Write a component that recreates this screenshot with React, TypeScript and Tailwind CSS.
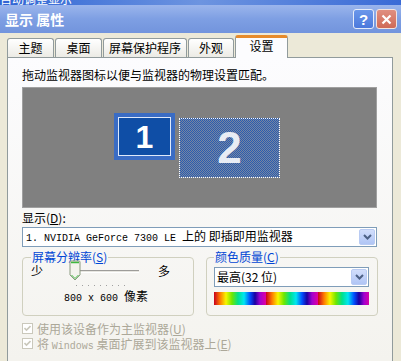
import React from "react";

const CJK = "font-['SimSun','Noto_Sans_CJK_SC',sans-serif]";

function Chevron() {
  return (
    <svg width="9" height="6" viewBox="0 0 9 6">
      <path d="M1 1 L4.5 4.5 L8 1" stroke="#4d6185" strokeWidth="2" fill="none" />
    </svg>
  );
}

function ComboArrow() {
  return (
    <div className="w-[16px] h-[16px] my-[1px] mr-[1px] rounded-[2px] border border-[#b9cbf3] bg-gradient-to-b from-[#d2defb] to-[#b0c5f5] flex items-center justify-center">
      <Chevron />
    </div>
  );
}

function Tab({ label, w, selected }: { label: string; w: number; selected?: boolean }) {
  if (selected) {
    return (
      <div
        className="relative z-10 -mb-px h-[23px] border border-b-0 border-[#919b9c] border-t-[#e68b2c] border-t-[3px] rounded-t-[3px] bg-[#fcfcfe] flex items-start justify-center pt-[1px] text-[12px] leading-[14px] text-black"
        style={{ width: w }}
      >
        {label}
      </div>
    );
  }
  return (
    <div
      className="h-[19px] border border-b-0 border-[#919b9c] rounded-t-[3px] bg-gradient-to-b from-[#ffffff] to-[#ecebe5] flex items-center justify-center text-[12px] leading-[14px] text-black"
      style={{ width: w }}
    >
      {label}
    </div>
  );
}

function Check({ label }: { label: React.ReactNode }) {
  return (
    <div className="flex items-center h-[15px]">
      <div className="w-[11px] h-[11px] border border-[#cac8bb] bg-white flex items-center justify-center">
        <svg width="7" height="7" viewBox="0 0 7 7">
          <path d="M0.5 3 L2.5 5 L6.5 1" stroke="#cac8bb" strokeWidth="1.6" fill="none" />
        </svg>
      </div>
      <span className="ml-[4px] h-[12px] text-[12px] leading-[12px] text-[#aca899] whitespace-nowrap">{label}</span>
    </div>
  );
}

export default function App() {
  return (
    <div className={`w-[401px] h-[361px] overflow-hidden bg-[#ece9d8] flex flex-col ${CJK}`}>
      {/* strip of window behind */}
      <div className="h-[5px] bg-gradient-to-r from-[#2f64d4] via-[#6d94e0] to-[#3a6ad6] overflow-hidden relative">
        <span className="absolute left-[0px] top-[-7px] text-[12px] leading-[12px] text-white whitespace-nowrap">
          自动调整显示
        </span>
      </div>
      {/* title bar */}
      <div className="h-[28px] bg-gradient-to-b from-[#9bb5ec] via-[#7e9fe3] to-[#7294dd] flex items-center pl-[5px] pr-[4px]">
        <span className="text-white font-bold text-[14px] leading-[16px] whitespace-nowrap">显示 属性</span>
        <div className="ml-auto flex gap-[2px]">
          <div className="w-[21px] h-[20px] rounded-[3px] border border-[#e6ecfa] bg-gradient-to-b from-[#6b97ea] to-[#4c79dc] flex items-center justify-center text-white font-bold text-[15px] leading-[15px] font-['Liberation_Sans',sans-serif]">
            ?
          </div>
          <div className="w-[21px] h-[20px] rounded-[3px] border border-[#f1e3e0] bg-gradient-to-b from-[#e08f80] to-[#cf6a57] flex items-center justify-center">
            <svg width="11" height="11" viewBox="0 0 11 11">
              <path d="M1.5 1.5 L9.5 9.5 M9.5 1.5 L1.5 9.5" stroke="white" strokeWidth="2.2" />
            </svg>
          </div>
        </div>
      </div>
      {/* body */}
      <div className="flex-1 pl-[7px] flex flex-col">
        <div className="h-[24px] flex items-end gap-[1px]">
          <Tab label="主题" w={47} />
          <Tab label="桌面" w={47} />
          <Tab label="屏幕保护程序" w={84} />
          <Tab label="外观" w={46} />
          <Tab label="设置" w={53} selected />
        </div>
        <div className="w-[386px] flex-1 border border-[#919b9c] border-b-0 bg-gradient-to-b from-[#fcfcfe] to-[#f4f3ee] pl-[14px] flex flex-col">
          <div className="mt-[11px] h-[12px] text-[12px] leading-[12px] text-black whitespace-nowrap">
            拖动监视器图标以便与监视器的物理设置匹配。
          </div>
          {/* monitor arrangement */}
          <div className="mt-[6px] w-[355px] h-[121px] bg-[#808080] border border-[#a0a0a0] flex pl-[91px] pt-[25px] gap-[4px]">
            <div className="w-[61px] h-[47px] bg-[#3a6cc4] p-[4px]">
              <div className="w-full h-full border border-[#dfe9fa] bg-[#0f4ea6] flex items-center justify-center text-white font-bold text-[32px] leading-[32px] font-['Liberation_Sans',sans-serif]">
                1
              </div>
            </div>
            <div className="mt-[5px] w-[101px] h-[60px] border border-dotted border-white bg-[repeating-conic-gradient(#2a5cb0_0%_25%,#7686a2_0%_50%)] bg-[length:2px_2px] flex items-center justify-center text-[#e8ecf4] font-bold text-[44px] leading-[44px] font-['Liberation_Sans',sans-serif]">
              2
            </div>
          </div>
          <div className="mt-[4px] h-[12px] text-[12px] leading-[12px] text-black whitespace-nowrap">
            显示(<u className="inline-block leading-[12px]">D</u>):
          </div>
          <div className="mt-[3px] w-[355px] h-[20px] border border-[#7f9db9] bg-white flex items-center">
            <span className="pl-[3px] text-[12px] leading-[12px] text-black whitespace-nowrap">
              <span className="inline-block leading-[12px] font-['Liberation_Mono',monospace] text-[10px] whitespace-pre">1. NVIDIA GeForce 7300 LE </span>
              上的 即插即用监视器
            </span>
            <div className="ml-auto">
              <ComboArrow />
            </div>
          </div>
          {/* group boxes */}
          <div className="mt-[4px] w-[356px] grid grid-cols-2 gap-[12px]">
            <fieldset className="h-[65px] border border-[#d0d0bf] rounded-[4px] px-[8px] relative">
              <legend className="px-[1px] ml-[0px] text-[12px] leading-[12px] text-[#0046d5] whitespace-nowrap">
                屏幕分辨率(<u className="inline-block leading-[12px]">S</u>)
              </legend>
              <div className="flex items-center h-[12px] mt-[2px]">
                <span className="text-[12px] leading-[12px]">少</span>
                <div className="relative ml-[33px] w-[63px] h-[12px] flex items-center">
                  <div className="w-full h-[3px] border-t border-[#9d9c99] border-b border-b-white bg-[#e7e6e0]" />
                  <div className="absolute left-[-7px] top-[-5px] w-[12px] h-[21px]">
                    <svg width="12" height="21" viewBox="0 0 12 21">
                      <path d="M1 2 Q1 1 2 1 L10 1 Q11 1 11 2 L11 15 L6 20 L1 15 Z" fill="#f4f3ee" stroke="#8b9a80" />
                      <path d="M2 2.5 L10 2.5" stroke="#3fb83f" strokeWidth="1.5" />
                      <path d="M2.5 15 L6 18.5 L9.5 15" stroke="#3fb83f" strokeWidth="1" fill="none" />
                    </svg>
                  </div>
                </div>
                <span className="ml-[19px] text-[12px] leading-[12px]">多</span>
              </div>
              <div className="ml-[45px] mt-[8px] flex gap-[5px]">
                {Array.from({ length: 9 }).map((_, i) => (
                  <div key={i} className="w-[1px] h-[1px] bg-[#a0a0a0]" />
                ))}
              </div>
              <div className="mt-[4px] ml-[33px] h-[12px] text-[12px] leading-[12px] whitespace-nowrap">
                <span className="inline-block leading-[12px] font-['Liberation_Mono',monospace] text-[10px] whitespace-pre">800 x 600 </span>像素
              </div>
            </fieldset>
            <fieldset className="h-[65px] border border-[#d0d0bf] rounded-[4px] px-[7px] relative">
              <legend className="px-[1px] ml-[0px] text-[12px] leading-[12px] text-[#0046d5] whitespace-nowrap">
                颜色质量(<u className="inline-block leading-[12px]">C</u>)
              </legend>
              <div className="mt-[4px] w-[155px] h-[20px] border border-[#7f9db9] bg-white flex items-center">
                <span className="pl-[2px] text-[12px] leading-[12px] whitespace-nowrap">最高(32 位)</span>
                <div className="ml-auto">
                  <ComboArrow />
                </div>
              </div>
              <div className="mt-[5px] w-[155px] h-[13px] bg-[repeating-linear-gradient(90deg,#c8001e_0px,#ff7a00_6px,#f6f600_12px,#6ee600_18px,#00e08a_24px,#00e6f0_30px,#0050ff_36px,#1a00a0_41px,#a000d0_46px,#e000a0_52px)]" />
            </fieldset>
          </div>
          <div className="mt-[5px] flex flex-col">
            <Check label={<>使用该设备作为主监视器(<u className="inline-block leading-[12px]">U</u>)</>} />
            <Check
              label={
                <>
                  将 <span className="inline-block leading-[12px] font-['Liberation_Mono',monospace] text-[10px]">Windows</span> 桌面扩展到该监视器上(<u className="inline-block leading-[12px]">E</u>)
                </>
              }
            />
          </div>
        </div>
      </div>
    </div>
  );
}
